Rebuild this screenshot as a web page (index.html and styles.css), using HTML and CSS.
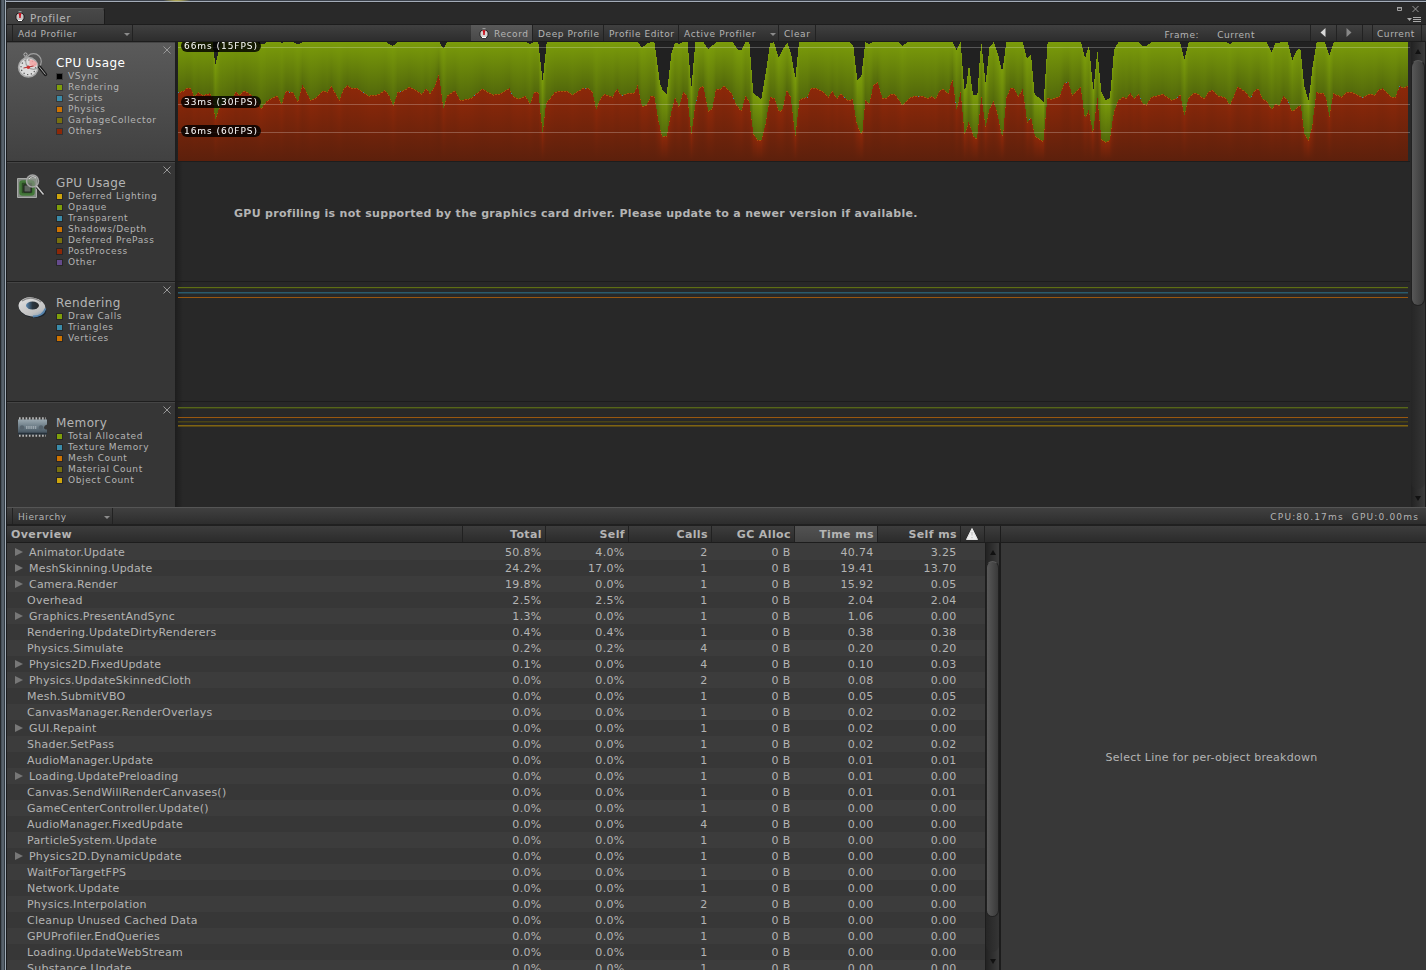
FILE: index.html
```
<!DOCTYPE html>
<html lang="en">
<head>
<meta charset="utf-8">
<title>Profiler</title>
<link rel="stylesheet" href="styles.css">
</head>
<body>
<div class="frame">
  <div class="tabbar">
    <div class="tab">
      <svg class="watch" viewBox="0 0 10 11"><rect x="3.5" y="0" width="3" height="2" fill="#999"/><circle cx="5" cy="6" r="4.1" fill="#c9c4c4" stroke="#151515" stroke-width=".9"/><path d="M5 6L3.4 2.4A4 4 0 0 1 6.500 2.400z" fill="#e01525"/><path d="M4.200 2.500h1.600v4.500H4.200z" fill="#c8101c"/><path d="M3 9.500h4" stroke="#fff"/></svg>
      <span>Profiler</span>
    </div>
    <svg class="winbtns" viewBox="0 0 30 20"><path d="M3.500 2.500h4v3h-4z" fill="none" stroke="#a0a0a0"/><path d="M3 2h5v1.500H3z" fill="#a0a0a0"/><path d="M18.500 1l6 6m0-6l-6 6" stroke="#999" fill="none"/><path d="M13 13h5l-2.500 3z" fill="#aaa"/><path d="M19 12.500h8M19 14.500h8M19 16.500h8" stroke="#aaa" fill="none"/></svg>
  </div>
  <div class="toolbar">
    <div class="cell add">Add Profiler<i class="drop"></i></div>
    <div class="space1"></div>
    <div class="cell rec">
      <svg class="watch" viewBox="0 0 10 11"><rect x="3.500" y="0" width="3" height="2" fill="#999"/><circle cx="5" cy="6" r="4.100" fill="#d5d0d0" stroke="#1b1b1b" stroke-width=".9"/><path d="M5 6L3.400 2.400A4 4 0 0 1 6.500 2.400z" fill="#e01525"/><path d="M4.200 2.500h1.600v4.500H4.200z" fill="#c8101c"/><path d="M3 9.500h4" stroke="#fff"/></svg>
      <span>Record</span>
    </div>
    <div class="cell deep">Deep Profile</div>
    <div class="cell editor">Profile Editor</div>
    <div class="cell active">Active Profiler<i class="drop"></i></div>
    <div class="cell clear">Clear</div>
    <div class="framelabel"><span>Frame:</span><span>Current</span></div>
    <div class="cell nav first"><svg viewBox="0 0 6 10"><path d="M5.500 0v9L.5 4.500z" fill="#d8d8d8"/></svg></div>
    <div class="cell nav"><svg viewBox="0 0 6 10"><path d="M.5 0v9l5-4.500z" fill="#888"/></svg></div>
    <div class="cell gap"></div>
    <div class="cell cur">Current</div>
  </div>

  <div class="charts">
    <div class="panels">
      <section class="panel">
        <div class="side selected">
          <svg class="icon" viewBox="0 0 32 28"><circle cx="8.500" cy="2.500" r="1.600" fill="none" stroke="#bbb"/><path d="M7.500 4h3v3h-3z" fill="#999"/><circle cx="12" cy="16" r="10.500" fill="#555"/><circle cx="11.300" cy="15.300" r="9.700" fill="#dcdcdc" stroke="#a8a8a8" stroke-width="1.600"/><circle cx="11.300" cy="15.300" r="7.300" fill="none" stroke="#555" stroke-width="1.200" stroke-dasharray="1.300 2.500"/><circle cx="16.500" cy="9.500" r="7.800" fill="none" stroke="#a0a0a0" stroke-width="1.200"/><path d="M12.500 13V7.500A9 9 0 0 1 20 11q0 3-3 4z" fill="#f5a5a5" opacity=".85"/><path d="M6.500 16l10-2" stroke="#a33"/><circle cx="11.300" cy="15.300" r="1.700" fill="#c33"/><path d="M22.500 15l6 7.500" stroke="#1c1c1c" stroke-width="3.500" stroke-linecap="round"/><path d="M22 14.500l6.500 8" stroke="#aaa" stroke-width="1"/></svg>
          <div class="info"><h2>CPU Usage</h2><ul>
            <li class="black">VSync</li><li class="green">Rendering</li><li class="blue">Scripts</li><li class="orange">Physics</li><li class="olive">GarbageCollector</li><li class="red">Others</li>
          </ul></div>
          <svg class="close" viewBox="0 0 8 8"><path d="M.5.5l7 7m0-7l-7 7"/></svg>
        </div>
        <div class="plot cpu">
          <canvas id="cpu" width="1230" height="119"></canvas>
          <div class="guide g66"></div><div class="guide g33"></div><div class="guide g16"></div>
          <span class="tag t66">66ms (15FPS)</span><span class="tag t33">33ms (30FPS)</span><span class="tag t16">16ms (60FPS)</span>
        </div>
      </section>
      <section class="panel">
        <div class="side">
          <svg class="icon low" viewBox="0 0 32 28"><path d="M.5 4.500h19v19H.5z" fill="#838983" stroke="#a8aaa8"/><rect x="3.500" y="7.500" width="13" height="13" rx="2" fill="#2b4a24" stroke="#44783a" stroke-width="2.500"/><path d="M7 11h7v7H7z" fill="#5c645c" stroke="#222"/><circle cx="15.500" cy="7" r="6" fill="#8b9389" fill-opacity=".6" stroke="#a5a5a5" stroke-width="1.500"/><path d="M12 5q3-4 7-1" stroke="#ddd" fill="none"/><path d="M20 13l6.500 7.500" stroke="#222" stroke-width="3"/><path d="M19.500 12l7 8.500" stroke="#c8c8c8" stroke-width="1.500"/></svg>
          <div class="info"><h2>GPU Usage</h2><ul>
            <li class="yellow">Deferred Lighting</li><li class="green">Opaque</li><li class="blue">Transparent</li><li class="orange">Shadows/Depth</li><li class="olive">Deferred PrePass</li><li class="red">PostProcess</li><li class="purple">Other</li>
          </ul></div>
          <svg class="close" viewBox="0 0 8 8"><path d="M.5.5l7 7m0-7l-7 7"/></svg>
        </div>
        <div class="plot"><p class="notice">GPU profiling is not supported by the graphics card driver. Please update to a newer version if available.</p></div>
      </section>
      <section class="panel">
        <div class="side">
          <svg class="icon lower-icon" viewBox="0 0 32 28"><defs><linearGradient id="ring" x1="0" y1="0" x2="1" y2="1"><stop offset="0" stop-color="#e4e4e4"/><stop offset=".7" stop-color="#c0c0c0"/><stop offset="1" stop-color="#6a8fb0"/></linearGradient><linearGradient id="hole" x1="0" y1="0" x2="1" y2="0"><stop offset="0" stop-color="#5b89b2"/><stop offset=".5" stop-color="#2a3640"/><stop offset="1" stop-color="#2b2b2b"/></linearGradient></defs><ellipse cx="15.500" cy="14.500" rx="14" ry="9" transform="rotate(12 15.500 14.500)" fill="#1b232b"/><ellipse cx="15" cy="13" rx="13.600" ry="9.500" transform="rotate(10 15 13)" fill="url(#ring)"/><path d="M16 22.500q10 0 12.500-8" stroke="#5684ae" stroke-width="1.800" fill="none"/><path d="M5 7q9-6 19 1" stroke="#8a8a8a" stroke-width="1.200" fill="none"/><ellipse cx="15.500" cy="11.500" rx="6.500" ry="4" fill="url(#hole)"/></svg>
          <div class="info"><h2>Rendering</h2><ul>
            <li class="green">Draw Calls</li><li class="blue">Triangles</li><li class="orange">Vertices</li>
          </ul></div>
          <svg class="close" viewBox="0 0 8 8"><path d="M.5.5l7 7m0-7l-7 7"/></svg>
        </div>
        <div class="plot"><svg class="lines" viewBox="0 0 1230 30">
          <path d="M0 5.500h1230" stroke="#5e6e14"/><path d="M0 6.500h1230" stroke="#30331f"/>
          <path d="M0 10.500h1230" stroke="#2a5a6c"/><path d="M0 11.500h1230" stroke="#294048"/>
          <path d="M0 15.500h1230" stroke="#99570f"/>
        </svg></div>
      </section>
      <section class="panel">
        <div class="side">
          <svg class="icon lower-icon" viewBox="0 0 32 28"><defs><linearGradient id="chip" x1="0" y1="0" x2="0" y2="1"><stop offset="0" stop-color="#9aa8b0"/><stop offset=".6" stop-color="#60707b"/><stop offset="1" stop-color="#3c4954"/></linearGradient></defs><path d="M2 4.500h27M2 21.500h27" stroke="#bbb" stroke-width="2.500" stroke-dasharray="1.600 1.700"/><path d="M1 5.500h29v5q-3 1-3 3t3 2v5H1z" fill="url(#chip)"/><path d="M1 19.500h29" stroke="#27313a" stroke-width="1.500"/><circle cx="5" cy="13.500" r="2.200" fill="#56636d"/><circle cx="24" cy="13.500" r="2.200" fill="#56636d"/><path d="M9 13.500h11" stroke="#b0bac0" stroke-width="3" stroke-dasharray="1.500 .7" opacity=".7"/></svg>
          <div class="info"><h2>Memory</h2><ul>
            <li class="green">Total Allocated</li><li class="blue">Texture Memory</li><li class="orange">Mesh Count</li><li class="olive">Material Count</li><li class="yellow">Object Count</li>
          </ul></div>
          <svg class="close" viewBox="0 0 8 8"><path d="M.5.5l7 7m0-7l-7 7"/></svg>
        </div>
        <div class="plot"><svg class="lines" viewBox="0 0 1230 30">
          <path d="M0 5.500h1230" stroke="#56651a"/><path d="M0 6.500h1230" stroke="#39401c"/>
          <path d="M0 15.500h1230" stroke="#99570f"/>
          <path d="M0 19.500h1230" stroke="#4a4318"/><path d="M0 20.500h1230" stroke="#393519"/>
          <path d="M0 23.500h1230" stroke="#806412"/><path d="M0 24.500h1230" stroke="#574819"/>
        </svg></div>
      </section>
    </div>
    <div class="scroll upper"><i class="up"></i><div class="track"><div class="thumb"></div></div><i class="down"></i></div>
  </div>

  <div class="toolbar lower">
    <div class="cell hier">Hierarchy<i class="drop"></i></div>
    <div class="stats"><span>CPU:80.17ms</span><span>GPU:0.00ms</span></div>
  </div>

  <div class="bottom">
    <div class="table">
      <div class="head">
        <div class="name">Overview</div><div>Total</div><div>Self</div><div>Calls</div><div>GC Alloc</div><div class="sorted">Time ms</div><div>Self ms</div>
        <div class="warn"><svg viewBox="0 0 12 12"><path d="M6 .5L11.500 11.500H.5z" fill="#eee" stroke="#e4e4e4" stroke-linejoin="round"/><path d="M6 4v3.500M6 9v1.200" stroke="#bbb"/></svg></div>
        <div class="pad"></div>
      </div>
      <div class="body">
        <div class="rows" id="rows"></div>
        <div class="scroll list"><i class="up"></i><div class="track"><div class="thumb"></div></div><i class="down"></i></div>
      </div>
    </div>
    <div class="detail"><div class="detailhead"></div><div class="empty">Select Line for per-object breakdown</div></div>
  </div>
</div>
<script src="app.js"></script>
</body>
</html>
```
FILE: styles.css
```
* { box-sizing: border-box; }
body { margin: 0; width: 1426px; height: 970px; overflow: hidden; background: #282828; color: #b4b4b4; font-family: "DejaVu Sans", Verdana, sans-serif; font-size: 11px; }
.frame { width: 1426px; height: 970px; padding-left: 7px; display: flex; flex-direction: column; overflow: hidden;
  background: linear-gradient(90deg, #24282c 0 1px, #48525b 1px 2px, #58626c 2px 4px, #303a42 4px 5px, #a2adb8 5px 6px, #1b1c1e 6px 7px, #282828 7px); }
.tabbar { flex: none; height: 24px; margin-left: -1px; padding-left: 1px; display: flex; justify-content: space-between; align-items: flex-end;
  background: radial-gradient(ellipse 14px 2px at 171px 0, #d4c85a, transparent), linear-gradient(#3c424c 0 1px, #a4acb8 1px 2px, #222 2px 3px, #292929 3px); }
.tab { width: 98px; height: 16px; padding-left: 8px; display: flex; align-items: center; background: linear-gradient(#484848, #404040); border: 1px solid #1c1c1c; border-top-color: #555; border-bottom: 0; border-radius: 3px 3px 0 0; border-left: 0; font-size: 10.500px; letter-spacing: .5px; }
.tab span { margin: 2px 0 0 5px; }
.watch { width: 10px; height: 11px; flex: none; }
.winbtns { width: 30px; height: 20px; margin: 0 2px -1px 0; }
.toolbar { flex: none; height: 18px; display: flex; padding-left: 5px; background: linear-gradient(#404040, #2d2d2d); border-top: 1px solid #1d1d1d; border-bottom: 1px solid #1d1d1d; font-size: 9px; letter-spacing: .58px; line-height: 18px; white-space: nowrap; }
.cell { flex: none; position: relative; padding-left: 6px; border-right: 1px solid #222; }
.add { width: 121px; border-left: 1px solid #222; padding-left: 5px; }
.drop { position: absolute; right: 2px; top: 8px; border: 3px solid transparent; border-top-color: #8c8c8c; border-bottom: 0; }
.space1 { width: 338px; }
.rec { width: 62px; display: flex; align-items: center; padding-left: 8px; background: linear-gradient(#595959, #484848); }
.rec span { margin: 1px 0 0 5px; }
.deep { width: 71px; padding-left: 5px; }
.editor { width: 75px; padding-left: 5px; }
.active { width: 100px; padding-left: 5px; letter-spacing: .65px; }
.clear { width: 37px; padding-left: 5px; }
.framelabel { flex: 1; padding: 1px 55px 0 0; display: flex; justify-content: flex-end; gap: 18px; }
.nav { width: 26px; padding: 0; display: flex; justify-content: center; align-items: center; }
.nav.first { width: 27px; border-left: 1px solid #222; }
.nav svg { width: 6px; height: 10px; margin-right: 2px; }
.gap { width: 10px; }
.cur { width: 49px; padding-left: 4px; margin-right: 4px; }

.charts { flex: none; height: 465px; display: flex; overflow: hidden; }
.panels { width: 1403px; }
.panel { height: 120px; display: flex; }
.side { width: 168px; height: 120px; flex: none; position: relative; padding: 13px 0 0 10px; display: flex; background: #363636; border-top: 1px solid #454545; border-bottom: 1px solid #1e1e1e; }
.side.selected { background: linear-gradient(#5a5a5a, #414141); }
.selected h2 { color: #fff; }
.icon { width: 32px; height: 28px; margin-top: -4px; }
.icon.low { margin-top: -2px; }
.icon.lower-icon { margin-top: -2px; }
.info { padding-left: 7px; }
h2 { margin: 0; font-size: 12px; font-weight: 400; line-height: 15px; letter-spacing: .4px; white-space: nowrap; }
ul { list-style: none; margin: 0; padding: 0; }
li { display: flex; align-items: center; height: 11px; font-size: 9px; line-height: 11px; letter-spacing: .62px; white-space: nowrap; }
li::before { content: ""; width: 5px; height: 5px; margin: 0 6px 1px 1px; outline: 1px solid rgba(0,0,0,.28); background: currentColor; }
li.black::before { background: #000; } li.green::before { background: #7f9f0a; } li.blue::before { background: #3a8ba9; }
li.orange::before { background: #ce7300; } li.olive::before { background: #78700f; } li.red::before { background: #8c2808; }
li.yellow::before { background: #cda50c; } li.purple::before { background: #654b8c; }
.close { position: absolute; right: 4px; top: 3px; width: 8px; height: 8px; fill: none; stroke: #999; }
.plot { flex: 1; position: relative; height: 120px; padding-left: 3px; background: linear-gradient(90deg, #1d1d1d, #282828 8px); border-bottom: 1px solid #1d1d1d; }
.plot canvas, .lines { display: block; width: 1230px; }
.lines { height: 30px; }
.guide { position: absolute; left: 3px; right: 0; height: 1px; background: rgba(255,255,255,.24); }
.g66 { top: 5px; } .g33 { top: 62px; } .g16 { top: 90px; }
.tag { position: absolute; left: 6px; width: 80px; height: 12px; border-radius: 6px; background: rgba(0,0,0,.82); color: #fff; font-size: 9px; letter-spacing: .95px; line-height: 12px; padding-left: 3px; white-space: nowrap; }
.t66 { top: -2px; } .t33 { top: 54px; } .t16 { top: 83px; }
.notice { margin: 0; padding: 43px 0 0 56px; font-weight: 700; font-size: 11px; line-height: 18px; letter-spacing: .3px; white-space: nowrap; }
.cpu { overflow: hidden; }

.scroll { flex: none; width: 14px; display: flex; flex-direction: column; background: linear-gradient(90deg, #222, #3c3c3c); border-right: 1px solid #1c1c1c; }
.scroll i { height: 18px; display: flex; align-items: center; justify-content: center; }
.scroll i::before { content: ""; border: 3.500px solid transparent; border-top: 0; border-bottom: 5px solid #111; }
.scroll i.down::before { border-top: 5px solid #111; border-bottom: 0; }
.track { flex: 1; border-radius: 7px; background: linear-gradient(90deg, #262626, #353535); }
.thumb { border-radius: 7px; background: linear-gradient(90deg, #585858, #3a3a3a); border: 1px solid #212121; border-top-color: #5a5a5a; }
.scroll.upper { width: 15px; margin-left: 1px; }
.upper .thumb { height: 246px; }

.toolbar.lower { height: 19px; justify-content: space-between; border-top-color: #555; border-bottom: 2px solid #202020; line-height: 19px; }
.hier { width: 101px; border-left: 1px solid #222; padding-left: 5px; }
.stats { display: flex; gap: 8px; padding: 0 7px 0 0; letter-spacing: 1.17px; }

.bottom { flex: 1; min-height: 0; display: flex; }
.table { width: 994px; display: flex; flex-direction: column; border-right: 1px solid #1c1c1c; }
.head { flex: none; height: 17px; display: flex; background: linear-gradient(#3d3d3d, #2b2b2b); border-bottom: 1px solid #1d1d1d; font-weight: 700; letter-spacing: .4px; line-height: 18px; }
.head div { width: 83px; padding-right: 3px; border-right: 1px solid #212121; text-align: right; white-space: nowrap; }
.head .name { width: 456px; text-align: left; padding-left: 4px; }
.head .sorted { background: linear-gradient(#525252, #444); }
.head .warn { width: 24px; padding: 2px 0 0 5px; text-align: left; }
.head .pad { width: 15px; border: 0; }
.warn svg { width: 12px; height: 12px; display: block; }
.body { flex: 1; min-height: 0; display: flex; }
.rows { width: 978px; padding-top: 1px; overflow: hidden; background: #3c3c3c; }
.row { height: 16px; display: flex; line-height: 17px; background: #3c3c3c; white-space: nowrap; }
.row:nth-child(even) { background: #373737; }
.row span { width: 83px; padding-right: 4.500px; text-align: right; letter-spacing: .3px; }
.row .name { width: 456px; padding-left: 20px; text-align: left; letter-spacing: .24px; }
.row .name.open { padding-left: 8px; display: flex; letter-spacing: .2px; }
.name.open::before { content: ""; width: 0; height: 0; margin: 4px 6px 0 0; border: 4.500px solid transparent; border-left: 8px solid #777; border-right: 0; }
.list { width: 15px; border-left: 1px solid #1d1d1d; }
.list .thumb { height: 356px; }
.detail { flex: 1; display: flex; flex-direction: column; background: #383838; }
.detailhead { height: 17px; background: linear-gradient(#3d3d3d, #2b2b2b); border-bottom: 1px solid #1d1d1d; }
.empty { flex: 1; display: flex; align-items: center; justify-content: center; letter-spacing: .26px; padding: 2px 4px 0 0; }
```
FILE: app.js
```
// Chart polylines, as flat x,y lists. Each segment has its own origin, in thirds of a pixel.
const others = [
  [-8, -6, [24,168,40,165,50,156,62,156,72,180,85,169,97,177,120,172,128,185,136,250,148,215,158,205,175,190,190,180,198,165,208,178,222,163,245,177,260,190,273,218,290,195,322,178,335,206,347,165,369,168,384,197,397,145,422,193,440,183,458,163,472,168,484,150,508,193,520,160,533,147,545,157,562,157,595,179,625,175,645,162,658,180,670,210,683,167,695,166,718,153,735,160,755,173,769,157,780,173,795,150,806,115,812,152,820,218,832,178,855,163,870,193,885,190,907,185]],
  [282, -42, [65,265,100,284,120,281,148,264,158,287,175,296,197,288,210,312,222,276,235,275,248,400,258,310,285,275,320,272,338,284,370,263,385,263,397,275,409,328,420,298,433,282,458,290,471,266,484,286,510,278,522,280,533,255,546,320,560,314,572,288,583,287,595,360,606,410,620,408,632,345,645,290,657,321,670,274,682,288,694,403,705,320,718,263,730,257,745,334,757,325,768,266,780,267,793,257,815,280,828,312,844,333,856,287,868,305,880,400,892,419,904,422,917,370,930,292,943,293,957,335,968,328,980,270,992,290,1006,410,1018,300]],
  [622, -6, [0,190,23,182,33,155,45,155,72,168,86,182,97,163,110,188,122,173,145,193,158,188,170,260,182,293,187,290,196,190,208,203,220,148,233,137,247,187,260,187,272,175,285,175,308,208,330,185,347,179,368,179,382,187,395,181,407,188,420,161,430,160,445,173,457,127,470,223,482,167,494,297,506,257,520,300,531,308,544,180,557,273,568,220,581,194,593,235,605,298,609,298,619,185,632,155,643,157,655,181,668,158,682,260,693,243,705,300,730,317,742,185,755,189,780,180,792,143,805,136,817,179,842,153,855,248,866,222,879,292,892,182,904,310,917,318,930,312]],
  [932, -42, [2,400,12,335,25,300,38,292,50,293,61,279,72,296,86,282,98,311,110,314,123,291,160,282,185,300,197,296,211,283,223,347,235,295,248,280,260,279,283,296,297,272,310,271,325,288,345,291,360,315,383,260,408,276,421,296,433,272,445,265,458,297,470,302,485,328,497,311,508,317,520,288,533,300,546,335,572,314,583,400,596,422,607,375,619,277,640,279,648,292,658,352,670,280,695,290,710,276,725,275,757,292,780,280,795,286,805,269,818,265,833,280,847,292,856,292,869,256,880,263,895,257]]
];
const total = [
  [-8, -6, [24,18,128,18,131,46,136,86,145,50,152,18,262,18,270,24,283,24,290,18,330,18,337,21,343,18,370,18,384,26,398,18,648,18,668,30,683,18,808,18,820,38,831,18,907,18]],
  [282, -42, [200,126,208,132,218,128,222,126,235,126,248,245,260,126,533,126,546,143,565,128,583,126,590,175,600,250,608,270,620,284,628,215,634,160,645,128,657,132,670,126,683,126,694,265,706,126,730,126,744,147,770,126,818,126,832,148,844,152,856,126,868,126,880,280,904,298,917,220,930,130,942,126,956,174,968,148,982,128,994,165,1006,235,1017,126]],
  [622, -6, [150,18,160,30,172,134,184,120,196,18,208,24,220,18,296,18,308,30,322,18,458,18,470,42,482,18,493,160,498,155,507,85,519,178,532,178,540,60,544,20,557,143,568,35,581,18,594,55,606,105,610,85,619,18,668,18,681,68,693,57,704,175,731,197,743,18,843,18,855,67,867,27,880,165,892,42,904,168,917,194,929,185]],
  [932, -42, [2,270,12,150,25,126,85,126,95,137,110,137,125,126,210,126,223,178,236,126,348,126,360,132,370,126,470,126,485,158,495,130,518,126,533,126,547,180,560,152,571,144,583,260,596,302,607,205,620,126,645,126,658,167,671,126,895,126]]
];
function expand(groups) {
  const pts = [];
  for (const [ox, oy, v] of groups)
    for (let i = 0; i < v.length; i += 2) pts.push([ox + v[i] / 3, oy + v[i + 1] / 3]);
  const out = [];
  let k = 0;
  for (let x = 0; x < 1230; x++) {
    while (k < pts.length - 2 && pts[k + 1][0] <= x + .5) k++;
    const [a, b] = [pts[k], pts[k + 1]];
    const t = (x + .5 - a[0]) / Math.max(.01, b[0] - a[0]);
    out.push(Math.max(0, Math.round(a[1] + (b[1] - a[1]) * Math.min(1, Math.max(0, t)))));
  }
  return out;
}
const red = expand(others), top1 = expand(total);
const c = document.getElementById('cpu').getContext('2d');
c.fillStyle = '#212121';
c.fillRect(0, 0, 1230, 119);
for (let x = 0; x < 1230; x++) {
  const t = top1[x], r = red[x];
  let g = c.createLinearGradient(0, t, 0, r);
  g.addColorStop(0, '#7b9c0a'); g.addColorStop(1, '#53690b');
  c.fillStyle = g; c.fillRect(x, t, 1, r - t);
  g = c.createLinearGradient(0, r, 0, 119);
  g.addColorStop(0, '#8c2809'); g.addColorStop(1, '#5c200c');
  c.fillStyle = g; c.fillRect(x, r, 1, 119 - r);
  if (x % 3 !== 1) {
    c.fillStyle = x % 37 === 0 ? '#3a8ba9' : '#ab5508';
    c.fillRect(x, r, 1, 1);
  }
}

const samples = [
  [1,'Animator.Update','50.8%','4.0%',2,'40.74','3.25'],
  [1,'MeshSkinning.Update','24.2%','17.0%',1,'19.41','13.70'],
  [1,'Camera.Render','19.8%','0.0%',1,'15.92','0.05'],
  [0,'Overhead','2.5%','2.5%',1,'2.04','2.04'],
  [1,'Graphics.PresentAndSync','1.3%','0.0%',1,'1.06','0.00'],
  [0,'Rendering.UpdateDirtyRenderers','0.4%','0.4%',1,'0.38','0.38'],
  [0,'Physics.Simulate','0.2%','0.2%',4,'0.20','0.20'],
  [1,'Physics2D.FixedUpdate','0.1%','0.0%',4,'0.10','0.03'],
  [1,'Physics.UpdateSkinnedCloth','0.0%','0.0%',2,'0.08','0.00'],
  [0,'Mesh.SubmitVBO','0.0%','0.0%',1,'0.05','0.05'],
  [0,'CanvasManager.RenderOverlays','0.0%','0.0%',1,'0.02','0.02'],
  [1,'GUI.Repaint','0.0%','0.0%',1,'0.02','0.00'],
  [0,'Shader.SetPass','0.0%','0.0%',1,'0.02','0.02'],
  [0,'AudioManager.Update','0.0%','0.0%',1,'0.01','0.01'],
  [1,'Loading.UpdatePreloading','0.0%','0.0%',1,'0.01','0.00'],
  [0,'Canvas.SendWillRenderCanvases()','0.0%','0.0%',1,'0.01','0.01'],
  [0,'GameCenterController.Update()','0.0%','0.0%',1,'0.00','0.00'],
  [0,'AudioManager.FixedUpdate','0.0%','0.0%',4,'0.00','0.00'],
  [0,'ParticleSystem.Update','0.0%','0.0%',1,'0.00','0.00'],
  [1,'Physics2D.DynamicUpdate','0.0%','0.0%',1,'0.00','0.00'],
  [0,'WaitForTargetFPS','0.0%','0.0%',1,'0.00','0.00'],
  [0,'Network.Update','0.0%','0.0%',1,'0.00','0.00'],
  [0,'Physics.Interpolation','0.0%','0.0%',2,'0.00','0.00'],
  [0,'Cleanup Unused Cached Data','0.0%','0.0%',1,'0.00','0.00'],
  [0,'GPUProfiler.EndQueries','0.0%','0.0%',1,'0.00','0.00'],
  [0,'Loading.UpdateWebStream','0.0%','0.0%',1,'0.00','0.00'],
  [0,'Substance.Update','0.0%','0.0%',1,'0.00','0.00']
];
document.getElementById('rows').innerHTML = samples.map(([o, n, t, s, k, ms, self]) =>
  `<div class="row"><span class="name${o ? ' open' : ''}">${n}</span><span>${t}</span><span>${s}</span><span>${k}</span><span>0 B</span><span>${ms}</span><span>${self}</span></div>`).join('');
```
